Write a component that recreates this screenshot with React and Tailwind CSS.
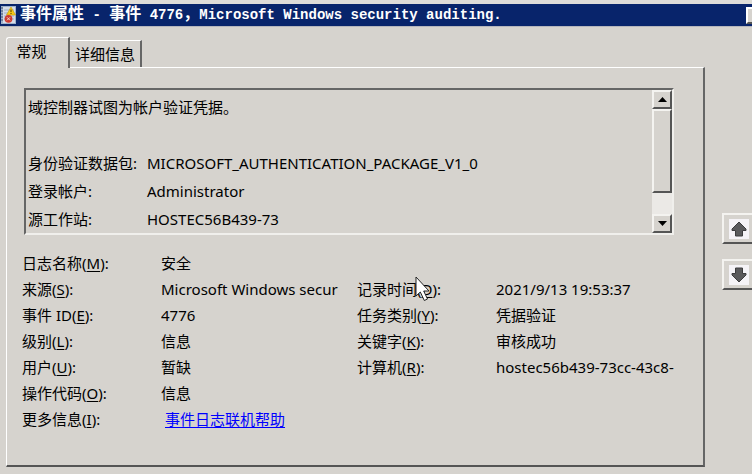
import React, { useState } from 'react'

const message = [
  { label: '域控制器试图为帐户验证凭据。' },
  { label: '' },
  { label: '身份验证数据包:', value: 'MICROSOFT_AUTHENTICATION_PACKAGE_V1_0' },
  { label: '登录帐户:', value: 'Administrator' },
  { label: '源工作站:', value: 'HOSTEC56B439-73' },
]

const details = [
  [{ label: '日志名称', hotkey: 'M', value: '安全' }],
  [
    { label: '来源', hotkey: 'S', value: 'Microsoft Windows secur' },
    { label: '记录时间', hotkey: 'D', value: '2021/9/13 19:53:37', cursor: true },
  ],
  [
    { label: '事件 ID', hotkey: 'E', value: '4776' },
    { label: '任务类别', hotkey: 'Y', value: '凭据验证' },
  ],
  [
    { label: '级别', hotkey: 'L', value: '信息' },
    { label: '关键字', hotkey: 'K', value: '审核成功' },
  ],
  [
    { label: '用户', hotkey: 'U', value: '暂缺' },
    { label: '计算机', hotkey: 'R', value: 'hostec56b439-73cc-43c8-' },
  ],
  [{ label: '操作代码', hotkey: 'O', value: '信息' }],
  [{ label: '更多信息', hotkey: 'I', value: '事件日志联机帮助', link: true }],
]

const EventIcon = () => (
  <svg className="h-[18px] w-4 shrink-0" viewBox="0 0 16 18">
    <rect x="1" y="0" width="15" height="18" fill="#9fb2cb" />
    <rect x="3" y="1" width="12" height="16" fill="#d5dce8" />
    <path d="M1 2h2M1 5h2M1 8h2M1 11h2M1 14h2" stroke="#4a5568" strokeWidth="1" />
    <path d="M4 4h10M4 7h10M4 10h10M4 13h10" stroke="#9fb0c8" strokeWidth="1" />
    <path d="M11 1l4.500 8h-9z" fill="#f5c816" stroke="#c79a00" strokeWidth="0.6" />
    <path d="M11 3.5v2.6M11 7v1" stroke="#4b3a00" strokeWidth="1" />
    <circle cx="8.5" cy="12.8" r="3.9" fill="#cf3a30" />
    <path d="M7 11.300l3 3M10 11.300l-3 3" stroke="#f3d6d3" strokeWidth="1" />
  </svg>
)

const Cursor = () => (
  <svg className="absolute left-[58px] top-0 h-[26px] w-4" viewBox="0 0 16 26">
    <path
      d="M1 1v19l4.300-4 4 8.500 3.200-1.500-3.800-8H14z"
      fill="#fff"
      stroke="#222"
      strokeWidth="1"
    />
  </svg>
)

const Arrow = ({ down }) => (
  <svg className={down ? 'h-5 w-5 rotate-180' : 'h-5 w-5'} viewBox="0 0 20 20">
    <rect width="20" height="20" fill="#f5f3f7" />
    <path d="M10 3l7 7v1.500h-3.500V17h-7v-5.500H3V10z" fill="#5a5a5c" stroke="#3c3c3e" strokeWidth="1" />
  </svg>
)

const raised = 'border-t-2 border-l-2 border-r-2 border-b-2 border-t-[#f4f3f0] border-l-[#f4f3f0] border-r-[#555] border-b-[#555] bg-[#d6d3ce]'

const ScrollButton = ({ down }) => (
  <button aria-label={down ? '向下滚动' : '向上滚动'} className={`flex h-[19px] w-full shrink-0 items-center justify-center ${raised}`}>
    <svg className="h-[5px] w-[9px]" viewBox="0 0 9 5">
      <path d={down ? 'M0 0h9L4.500 5z' : 'M0 5h9L4.500 0z'} fill="#000" />
    </svg>
  </button>
)

const Field = ({ item }) => (
  <>
    <dt className="relative whitespace-nowrap">
      {item.label}(<span className="underline underline-offset-2">{item.hotkey}</span>):
      {item.cursor && <Cursor />}
    </dt>
    <dd className="overflow-hidden whitespace-nowrap">
      {item.link ? (
        <a href="#help" className="ml-1 text-[#0000ff] underline underline-offset-2">{item.value}</a>
      ) : (
        item.value
      )}
    </dd>
  </>
)

const App = () => {
  const [tab, setTab] = useState('general')

  return (
    <div className="min-h-screen overflow-hidden bg-[#d6d3ce] font-['Noto_Sans','Noto_Sans_CJK_SC',sans-serif] text-[15px] text-black">
      <header className="flex h-[27px] items-center justify-between overflow-hidden border-t-4 border-b border-t-[#dedcd8] border-b-[#b5b6bd] bg-[#08246b]">
        <div className="flex items-center gap-1">
          <EventIcon />
          <h1 className="whitespace-pre font-['Liberation_Mono','Noto_Sans_CJK_SC',monospace] text-base leading-[22px] font-bold text-white">
            事件属性<span className="text-sm"> - </span>事件<span className="text-sm"> 4776</span>，<span className="text-sm">Microsoft Windows security auditing.</span>
          </h1>
        </div>
        <button aria-label="关闭" className="-mr-3 h-[17px] w-[18px] shrink-0 border-2 border-t-white border-l-white border-r-[#555] border-b-[#555] bg-[#d6d3ce]" />
      </header>

      <div className="flex items-start pt-2.5 pb-2 pl-1.5">
        <main className="min-w-0 flex-1">
          <div role="tablist" className="relative z-10 -mb-px flex items-end">
            <button
              role="tab"
              aria-selected={tab === 'general'}
              onClick={() => setTab('general')}
              className="h-[31px] w-16 rounded-tl-[3px] border-t border-r-2 border-l border-t-white border-r-[#666] border-l-white bg-[#d6d3ce] pr-3 pb-1"
            >
              常规
            </button>
            <button
              role="tab"
              aria-selected={tab === 'details'}
              onClick={() => setTab('details')}
              className="mb-px h-[27px] w-[72px] border-t border-r-2 border-t-white border-r-[#666] bg-[#d6d3ce]"
            >
              详细信息
            </button>
          </div>

          <section className="border-t border-r-2 border-b-2 border-l border-t-white border-r-[#666] border-b-[#555] border-l-white pt-5 pb-[33px]">
            <div className="mr-[29px] ml-[17px] flex border-2 border-t-[#666] border-r-[#f0efec] border-b-[#f0efec] border-l-[#666]">
              <div className="grid min-w-0 flex-1 grid-cols-[121px_1fr] content-start pt-[3px] leading-7">
                {message.map((line, idx) => (
                  <React.Fragment key={idx}>
                    <span className="h-7 pl-0.5 whitespace-nowrap">{line.label}</span>
                    <span className="whitespace-nowrap">{line.value}</span>
                  </React.Fragment>
                ))}
              </div>
              <div className="flex w-5 flex-col bg-[#ebe9e6]">
                <ScrollButton />
                <div className={`h-[84px] ${raised}`} />
                <div className="flex-1" />
                <ScrollButton down />
              </div>
            </div>

            <dl className="mt-[15px] mr-[23px] ml-[15px] grid grid-cols-[127px_1fr_127px_1fr] gap-x-3 leading-[26px]">
              {details.map((row, idx) => (
                <React.Fragment key={idx}>
                  {row.map((item) => (
                    <Field key={item.hotkey} item={item} />
                  ))}
                  {row.length === 1 && <div className="col-span-2" />}
                </React.Fragment>
              ))}
            </dl>
          </section>
        </main>

        <nav className="-mr-1 flex flex-col gap-[15px] pt-[176px] pl-[17px]">
          <button aria-label="上一个事件" className={`flex h-[31px] w-[34px] items-center justify-center ${raised}`}>
            <Arrow />
          </button>
          <button aria-label="下一个事件" className={`flex h-[31px] w-[34px] items-center justify-center ${raised}`}>
            <Arrow down />
          </button>
        </nav>
      </div>
    </div>
  )
}

export default App
